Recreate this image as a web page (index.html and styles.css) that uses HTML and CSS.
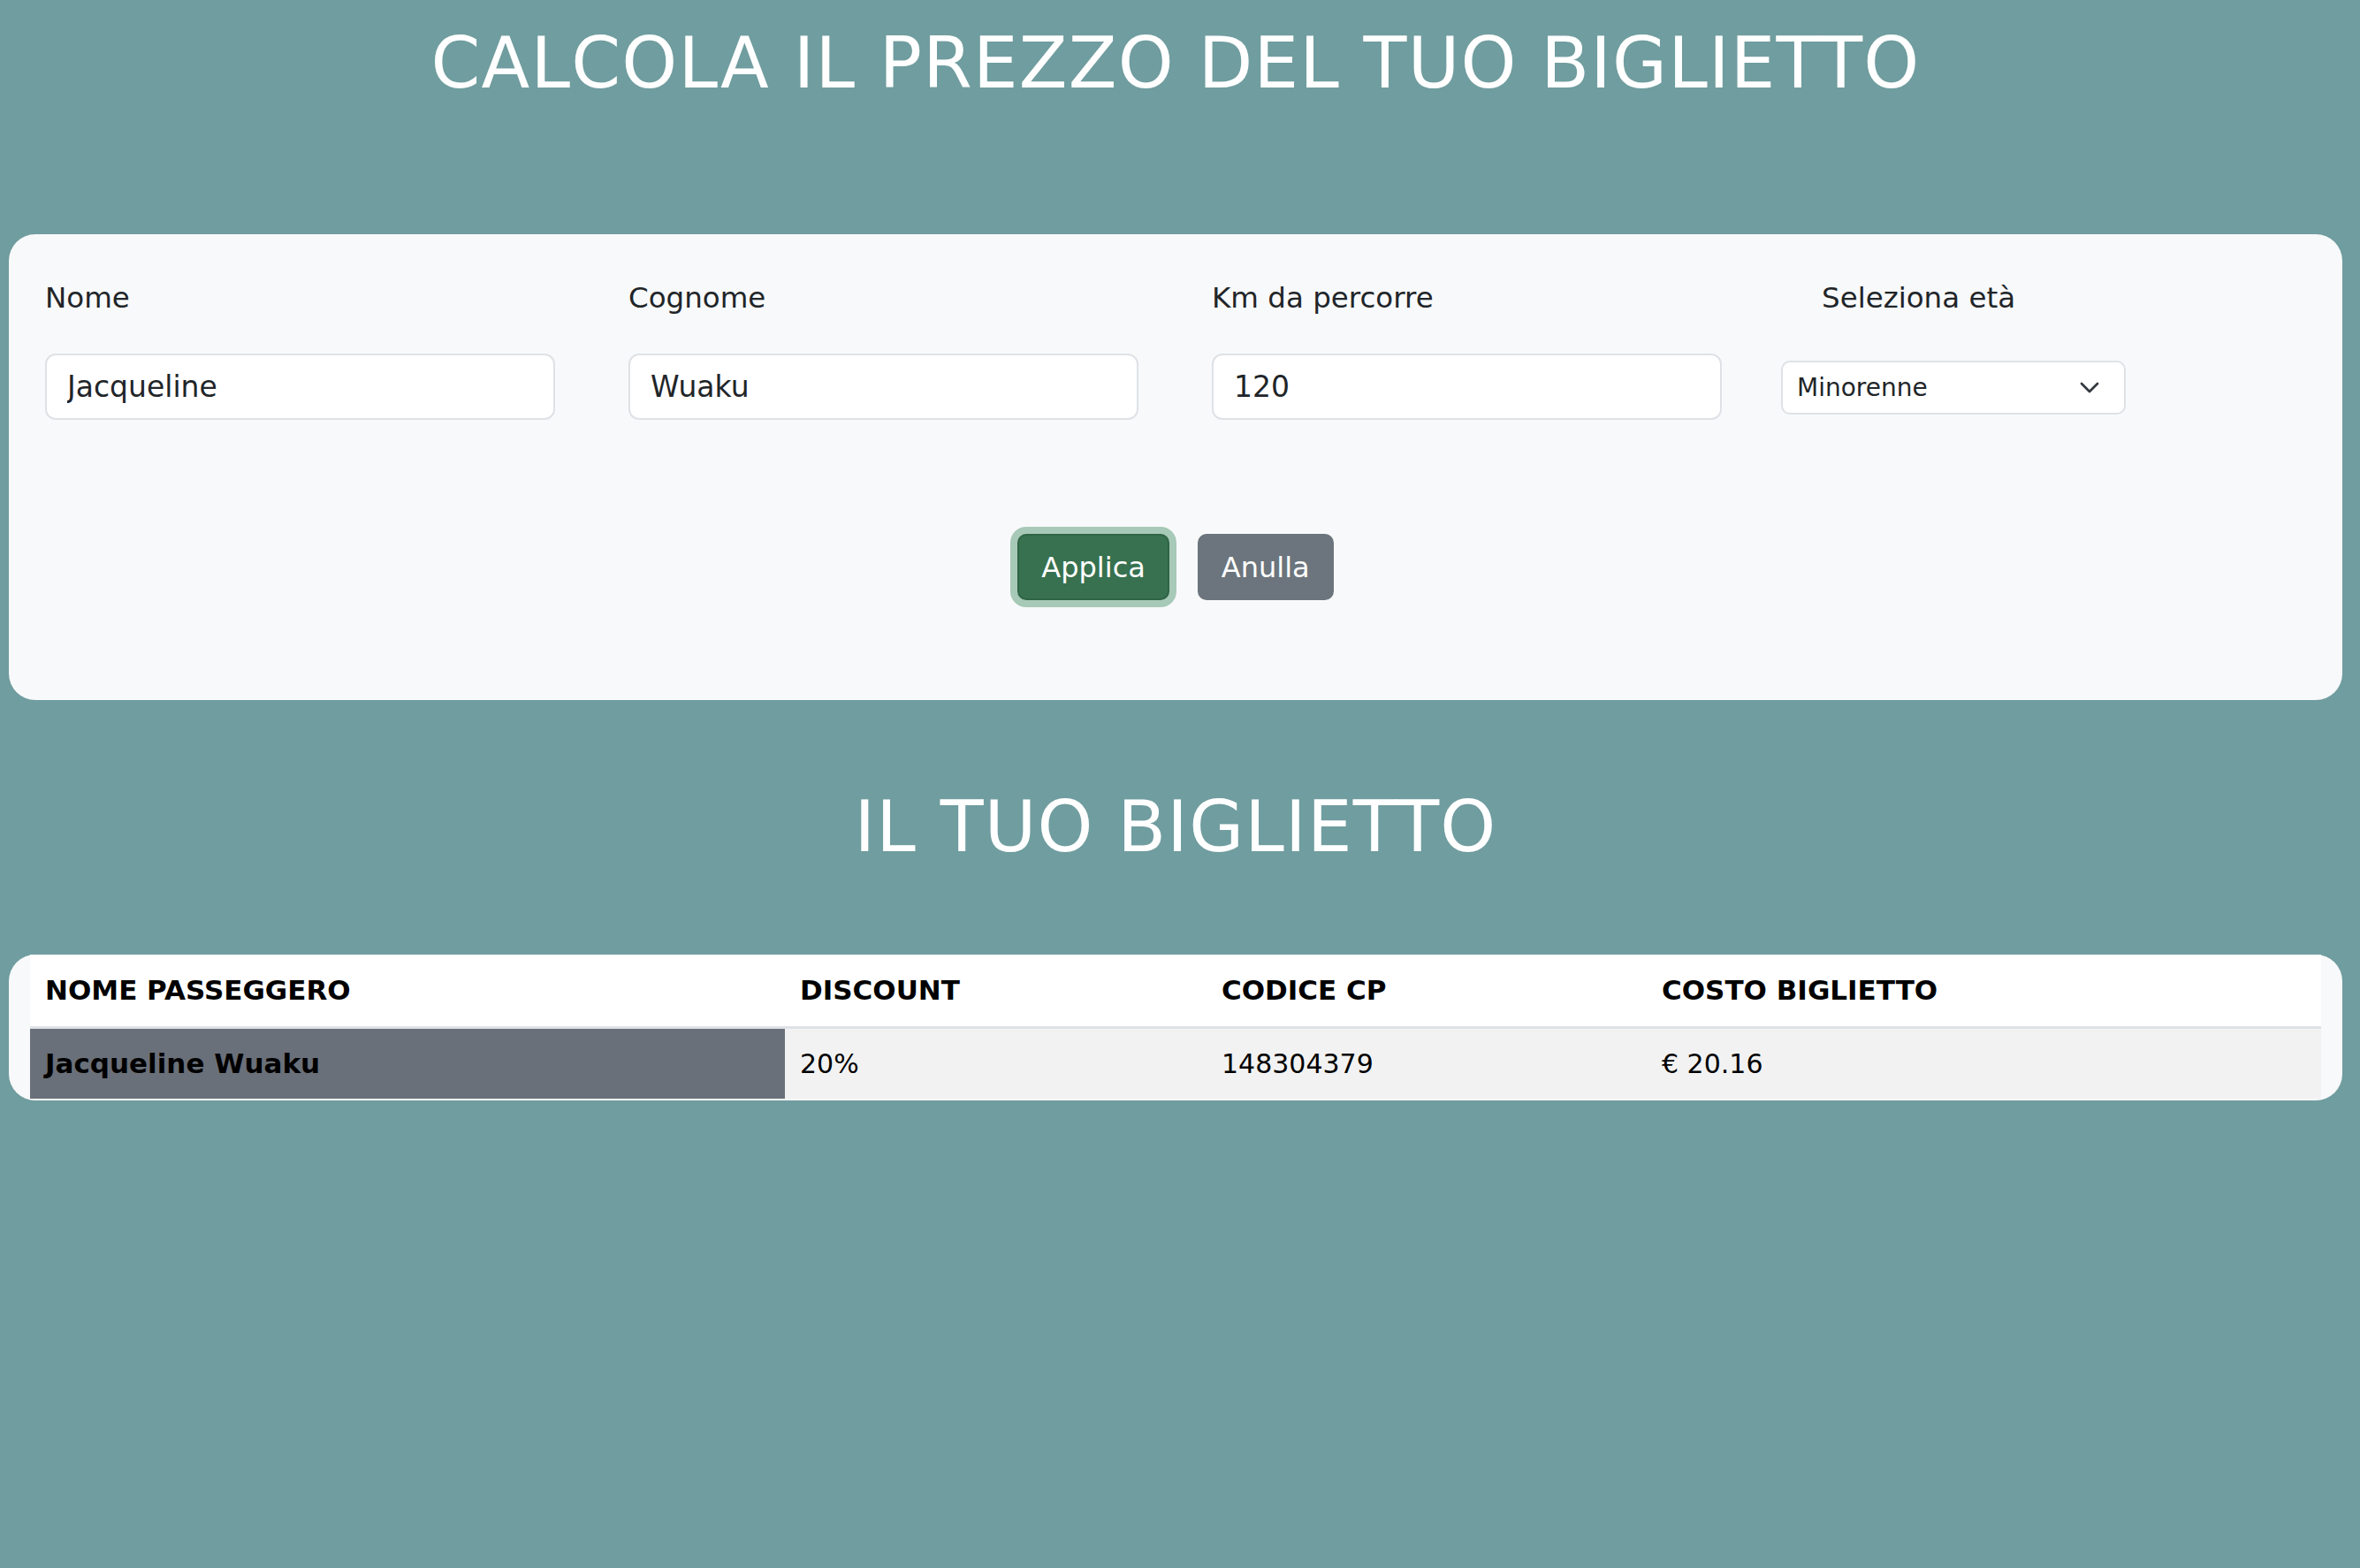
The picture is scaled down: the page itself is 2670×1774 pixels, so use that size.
FILE: index.html
```html
<!DOCTYPE html>
<html lang="it">
<head>
<meta charset="utf-8">
<title>Calcola il prezzo del tuo biglietto</title>
<link rel="stylesheet" href="styles.css">
</head>
<body>
<div class="container">
  <h1 class="title">CALCOLA IL PREZZO DEL TUO BIGLIETTO</h1>

  <section class="form-card">
    <div class="fields">
      <div class="field">
        <label class="label" for="nome">Nome</label>
        <input class="input" id="nome" type="text" value="Jacqueline">
      </div>
      <div class="field">
        <label class="label" for="cognome">Cognome</label>
        <input class="input" id="cognome" type="text" value="Wuaku">
      </div>
      <div class="field">
        <label class="label" for="km">Km da percorre</label>
        <input class="input" id="km" type="text" value="120">
      </div>
      <div class="field field-age">
        <label class="label label-age" for="eta">Seleziona età</label>
        <div class="select-wrap">
          <select class="select" id="eta">
            <option>Minorenne</option>
            <option>Maggiorenne</option>
            <option>Over 65</option>
          </select>
          <svg class="chevron" width="22" height="13" viewBox="0 0 22 13"><polyline points="2,2 11,11 20,2" fill="none" stroke="#343a40" stroke-width="2.8" stroke-linecap="round" stroke-linejoin="round"/></svg>
        </div>
      </div>
    </div>
    <div class="actions">
      <button class="btn btn-green" type="button">Applica</button>
      <button class="btn btn-gray" type="button">Anulla</button>
    </div>
  </section>

  <h1 class="title title-ticket">IL TUO BIGLIETTO</h1>

  <section class="table-card">
    <table class="ticket">
      <colgroup>
        <col class="c1"><col class="c2"><col class="c3"><col class="c4">
      </colgroup>
      <thead>
        <tr>
          <th>NOME PASSEGGERO</th>
          <th>DISCOUNT</th>
          <th>CODICE CP</th>
          <th>COSTO BIGLIETTO</th>
        </tr>
      </thead>
      <tbody>
        <tr>
          <td class="name-cell">Jacqueline Wuaku</td>
          <td>20%</td>
          <td>148304379</td>
          <td>€ 20.16</td>
        </tr>
      </tbody>
    </table>
  </section>
</div>
</body>
</html>
```

FILE: styles.css
```css
* { box-sizing: border-box; }

html, body {
  margin: 0;
  padding: 0;
  background: #709d9f;
  font-family: "DejaVu Sans", "Liberation Sans", sans-serif;
  color: #212529;
}

body { min-height: 1774px; }

.container {
  margin-left: 10px;
  width: 2640px;
  padding-bottom: 40px;
}

.title {
  margin: 24px 0 145px 0;
  font-size: 80px;
  line-height: 96px;
  font-weight: 400;
  letter-spacing: 1.2px;
  color: #ffffff;
  text-align: center;
}

.title-ticket {
  margin: 96px 0 96px 0;
}

/* Form card */
.form-card {
  background: #f8f9fa;
  border-radius: 30px;
  padding: 47px 41px 113px 41px;
}

.fields {
  display: flex;
  align-items: flex-start;
}

.field {
  width: 577px;
  margin-right: 83px;
  display: flex;
  flex-direction: column;
}

.field-age {
  width: 390px;
  margin-right: 0;
  margin-left: -16px;
}

.label {
  font-size: 32.5px;
  line-height: 50px;
  color: #212529;
  margin-bottom: 38px;
}

.label-age {
  margin-left: 46px;
  margin-bottom: 46px;
}

.input {
  width: 577px;
  height: 75px;
  border: 2px solid #dee2e6;
  border-radius: 12px;
  background: #ffffff;
  padding: 0 23px;
  font-family: "DejaVu Sans", "Liberation Sans", sans-serif;
  font-size: 33px;
  color: #212529;
  outline: none;
}

.select-wrap {
  position: relative;
  width: 390px;
  height: 61px;
}

.select {
  appearance: none;
  -webkit-appearance: none;
  width: 390px;
  height: 61px;
  border: 2px solid #dee2e6;
  border-radius: 10px;
  background: #ffffff;
  padding: 0 60px 0 16px;
  font-family: "DejaVu Sans", "Liberation Sans", sans-serif;
  font-size: 28px;
  color: #212529;
  outline: none;
}

.chevron {
  position: absolute;
  right: 30px;
  top: 24px;
  pointer-events: none;
}

.actions {
  display: flex;
  justify-content: center;
  gap: 32px;
  margin-top: 129px;
}

.btn {
  height: 75px;
  padding: 0 25px;
  border-radius: 10px;
  font-family: "DejaVu Sans", "Liberation Sans", sans-serif;
  font-size: 32px;
  color: #ffffff;
  cursor: pointer;
}

.btn-green {
  background: #377150;
  border: 2px solid #2f6446;
  box-shadow: 0 0 0 8px #a7c9b7;
}

.btn-gray {
  background: #6c757d;
  border: 2px solid #6c757d;
}

/* Table card */
.table-card {
  background: #f8f9fa;
  border-radius: 30px;
  padding: 0 24px 2px 24px;
}

.ticket {
  width: 100%;
  border-collapse: collapse;
  table-layout: fixed;
}

.c1 { width: 854px; }
.c2 { width: 477px; }
.c3 { width: 498px; }
.c4 { width: auto; }

.ticket th {
  height: 82px;
  padding: 0 17px;
  background: #ffffff;
  border-bottom: 3px solid #dee2e6;
  text-align: left;
  vertical-align: middle;
  font-size: 31px;
  font-weight: 700;
  color: #000000;
}

.ticket td {
  height: 81px;
  padding: 0 17px;
  background: #f2f2f2;
  vertical-align: middle;
  font-size: 30px;
  color: #000000;
}

.ticket td.name-cell {
  background: #6a7079;
  font-weight: 700;
  font-size: 31px;
}
```
